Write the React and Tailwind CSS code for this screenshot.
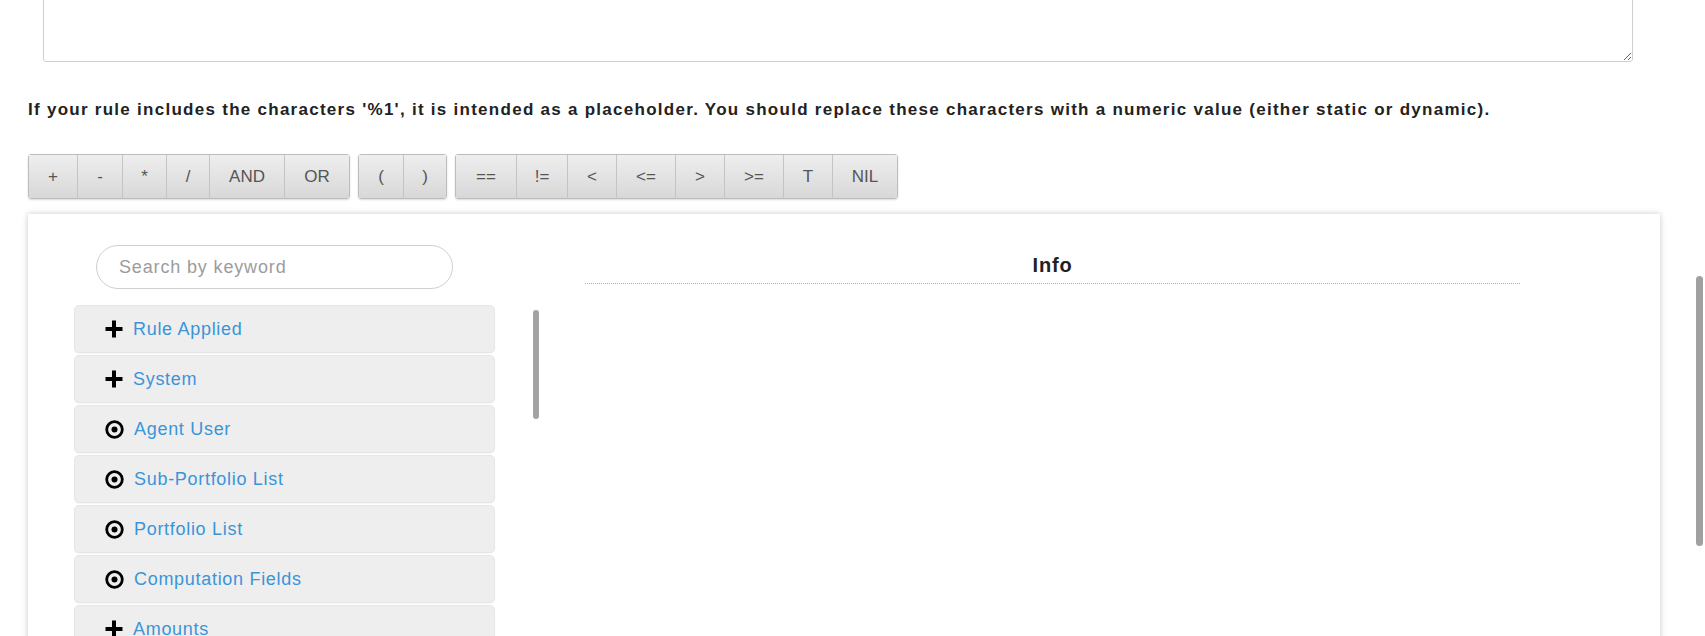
import React from "react";

const groups = [
  [["+", "w-[48px]"], ["-", "w-[45px]"], ["*", "w-[44px]"], ["/", "w-[43px]"], ["AND", "w-[75px]"], ["OR", "w-[65px]"]],
  [["(", "w-[44px]"], [")", "w-[43px]"]],
  [["==", "w-[60px]"], ["!=", "w-[51px]"], ["<", "w-[49px]"], ["<=", "w-[59px]"], [">", "w-[49px]"], [">=", "w-[59px]"], ["T", "w-[49px]"], ["NIL", "w-[65px]"]],
];

const items = [
  ["plus", "Rule Applied"],
  ["plus", "System"],
  ["record", "Agent User"],
  ["record", "Sub-Portfolio List"],
  ["record", "Portfolio List"],
  ["record", "Computation Fields"],
  ["plus", "Amounts"],
  ["plus", "Dates"],
];

function PlusIcon() {
  return (
    <svg width="18" height="18" viewBox="0 0 18 18" className="shrink-0">
      <rect x="0.5" y="7" width="17" height="4" fill="#000" />
      <rect x="7" y="0.5" width="4" height="17" fill="#000" />
    </svg>
  );
}

function RecordIcon() {
  return (
    <svg width="19" height="19" viewBox="0 0 19 19" className="shrink-0">
      <circle cx="9.5" cy="9.5" r="7.8" fill="none" stroke="#000" strokeWidth="2.8" />
      <circle cx="9.5" cy="9.5" r="3" fill="#000" />
    </svg>
  );
}

export default function App() {
  return (
    <div className="relative h-[636px] overflow-hidden bg-white font-['Liberation_Sans',Arial,sans-serif] text-[#222]">
      <div className="pl-[28px]">
        <textarea className="-mt-[40px] ml-[15px] block h-[102px] w-[1590px] rounded-[3px] border border-[#cfcfcf] bg-white" />

        <p className="mt-[38px] text-[17px] leading-[20px] font-bold tracking-[1.27px]">
          If your rule includes the characters '%1', it is intended as a placeholder. You should replace these characters with a numeric value (either static or dynamic).
        </p>

        <div className="mt-[34px] flex gap-[8px]">
          {groups.map((g, i) => (
            <div key={i} className="flex rounded-[3px] border border-[#bdbdbd] shadow-[0_1px_2px_rgba(0,0,0,0.15)]">
              {g.map(([label, w], j) => (
                <button
                  key={label}
                  className={`${w} h-[43px] bg-linear-to-b from-[#eeeeee] to-[#d8d8d8] text-[17px] text-[#555] ${j > 0 ? "border-l border-[#c4c4c4]" : ""}`}
                >
                  {label}
                </button>
              ))}
            </div>
          ))}
        </div>

        <div className="mt-[15px] flex h-[480px] w-[1632px] bg-white shadow-[0_0_6px_rgba(0,0,0,0.22)]">
          <div className="ml-[46px] w-[467px]">
            <input
              placeholder="Search by keyword"
              className="mt-[31px] ml-[22px] h-[44px] w-[357px] rounded-full border border-[#d0d0d0] pl-[22px] text-[18px] tracking-[0.85px] outline-none placeholder:text-[#9c9c9c]"
            />
            <div className="relative mt-[16px]">
              <div className="flex w-[421px] flex-col gap-[2px]">
                {items.map(([icon, label]) => (
                  <div
                    key={label}
                    className="flex h-[48px] items-center gap-[10px] rounded-[5px] border border-[#e6e6e6] bg-[#eeeeee] pl-[30px] shadow-[0_1px_1px_rgba(0,0,0,0.04)]"
                  >
                    {icon === "plus" ? <PlusIcon /> : <RecordIcon />}
                    <span className="text-[18px] tracking-[0.7px] text-[#3a95d8]">{label}</span>
                  </div>
                ))}
              </div>
              <div className="absolute left-[459px] top-[5px] h-[109px] w-[6px] rounded-full bg-[#a3a3a3]" />
            </div>
          </div>

          <div className="mt-[39px] ml-[44px] w-[935px]">
            <h3 className="border-b border-dotted border-[#f5a623] pb-[6px] text-center text-[20px] leading-[24px] font-bold tracking-[0.8px] text-[#222]">
              Info
            </h3>
          </div>
        </div>
      </div>

      <div className="absolute right-[2px] top-[276px] h-[270px] w-[7px] rounded-full bg-[#a0a0a0]" />
    </div>
  );
}
